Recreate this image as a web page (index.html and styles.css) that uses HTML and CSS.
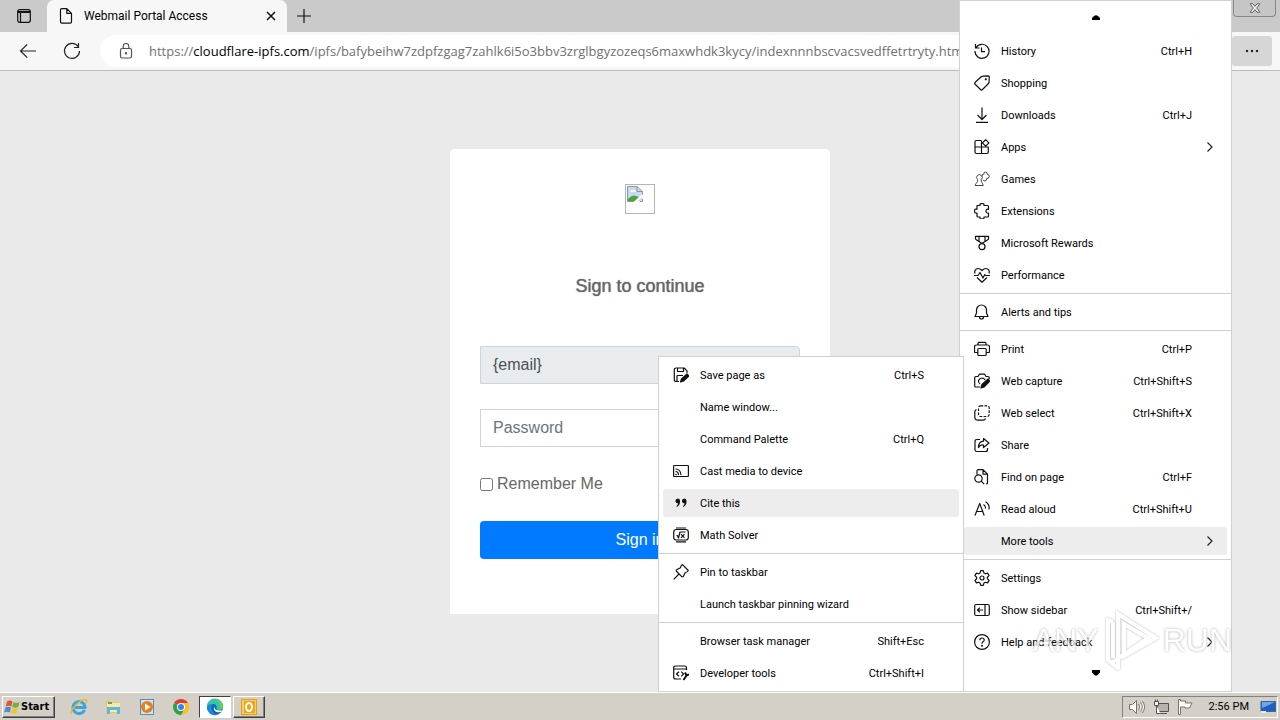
FILE: index.html
```html
<!DOCTYPE html>
<html lang="en">
<head>
    <meta charset="UTF-8">
    <meta name="viewport" content="width=device-width, initial-scale=1.0">
    <title>Webmail Portal Access</title>
    <link rel="stylesheet" href="styles.css">
</head>
<body>
    <div class="titlebar">
        <button class="tab-actions" aria-label="Tab actions">
            <svg class="icon" viewBox="0 0 16 16"><rect x="1.7" y="1.7" width="12.6" height="12.6" rx="2"/><path d="M2 3.5h12M2 4.5h12M4.5 5v9"/></svg>
        </button>
        <div class="tab">
            <svg class="icon" viewBox="0 0 16 16"><path d="M2.5 2q0-1.3 1.2-1.3h5.1l4.7 4.7v8.4q0 1.4-1.3 1.4H3.8q-1.3 0-1.3-1.4zM8.8.8v4.6h4.6"/></svg>
            <span class="tab-title">Webmail Portal Access</span>
            <button class="tab-close" aria-label="Close tab">
                <svg viewBox="0 0 10 10"><path d="M1 1l8 8M9 1L1 9"/></svg>
            </button>
        </div>
        <button class="new-tab" aria-label="New tab">
            <svg class="icon" viewBox="0 0 16 16"><path d="M8 1v14M1 8h14"/></svg>
        </button>
        <button class="window-close" aria-label="Close window">
            <svg viewBox="0 0 12 10"><path d="M1 .8h3l2 2.6L8 .8h3L7.700 5 11 9.200H8L6 6.600 4 9.200H1L4.300 5z"/></svg>
        </button>
    </div>

    <div class="toolbar">
        <button class="nav-button" aria-label="Back">
            <svg viewBox="0 0 18 18"><path d="M17 9H1.500M8.200 2.300L1.500 9l6.700 6.700"/></svg>
        </button>
        <button class="nav-button" aria-label="Refresh">
            <svg viewBox="0 0 18 18"><path d="M15.200 4.700A7.500 7.500 0 1 0 16.500 9M15.500 1v4.500H11"/></svg>
        </button>
        <div class="address">
            <svg class="icon" viewBox="0 0 16 16"><rect x="2.500" y="5.500" width="11" height="9.500" rx="1.500"/><path d="M5.200 5.500V3.300a2.800 2.800 0 0 1 5.600 0v2.200"/><circle class="solid" cx="8" cy="10.300" r=".6"/></svg>
            <span class="url">https://<b>cloudflare-ipfs.com</b>/ipfs/bafybeihw7zdpfzgag7zahlk6i5o3bbv3zrglbgyzozeqs6maxwhdk3kycy/indexnnnbscvacsvedffetrtryty.html</span>
        </div>
        <button class="more-button" aria-label="Settings and more">
            <svg class="icon" viewBox="0 0 16 16"><circle cx="3" cy="8" r=".8"/><circle cx="8" cy="8" r=".8"/><circle cx="13" cy="8" r=".8"/></svg>
        </button>
    </div>

    <main>
        <form class="login">
            <div class="logo">
                <svg viewBox="0 0 16 16" role="img" aria-label="Missing image">
                    <path fill="#c5daf5" d="M1 1h9l5 5v9H1z"/>
                    <path fill="#fff" d="M3 6q1-3 4-2 2 0 2 2z"/>
                    <path fill="#4fa32f" d="M1 13q4-5 8-3l3 1-4 4H1z"/>
                    <path fill="none" stroke="#8e949c" d="M7 15.500H.5V.5H10l5.500 5V9M10 .5v5h5.500M13 15.500h2.500V13"/>
                    <path stroke="#fff" stroke-width="2" d="M8 16l8-7"/>
                </svg>
            </div>
            <h1>Sign to continue</h1>
            <input type="text" class="field email" aria-label="Email" value="{email}" readonly>
            <input type="password" class="field" aria-label="Password" placeholder="Password">
            <label class="remember"><input type="checkbox"> Remember Me</label>
            <button type="submit" class="sign-in">Sign in</button>
        </form>
    </main>

    <div class="taskbar">
        <button class="start">
            <svg viewBox="0 0 16 16"><path fill="#e8532b" d="M3 2.500q3-2 5.500 0L7.300 7.500q-2.500-1.500-5.500 0z"/><path fill="#6db33f" d="M9.500 3q2.500 1.700 6 0l-1.300 5q-3 1.500-6 0z"/><path fill="#3f8ede" d="M1.500 8.500q3-1.500 5.500 0l-1.300 5q-2.500-1.700-5.500 0z"/><path fill="#f8c22c" d="M8 9q3 1.500 6 0l-1.300 5q-3 1.600-6 0z"/></svg>
            Start
        </button>
        <div class="tasks">
            <button class="task" aria-label="Internet Explorer">
                <svg viewBox="0 0 18 18"><path fill="none" stroke="#3aa5e0" stroke-width="3" d="M14.500 12A6 6 0 1 1 15 9.500H5"/><path fill="none" stroke="#efb52c" stroke-width="1.500" d="M2 16q-3-2 4-9t10.500-5q1 1-1 4"/></svg>
            </button>
            <button class="task" aria-label="File Explorer">
                <svg viewBox="0 0 18 18"><path fill="#e9c867" d="M2 3h5l1 1h7v11H2z"/><path fill="#f9e9a6" d="M3 5h13v9H3z"/><path fill="#5cb7d9" d="M3 9h13v7h-3v-4H6v4H3z"/><path fill="#63a94e" d="M4 4h4v2H4z"/></svg>
            </button>
            <button class="task" aria-label="Media Player">
                <svg viewBox="0 0 18 18"><path fill="#4b91cb" d="M2 1h14v16H2z"/><path fill="#cfe5f5" d="M3 2h12v14H3z"/><circle cx="9" cy="9" r="6" fill="#ef7d13"/><path fill="#fff" d="M7 5.500l5.500 3.500L7 12.500z"/></svg>
            </button>
            <button class="task" aria-label="Chrome">
                <svg viewBox="0 0 18 18"><path fill="#e33b2e" d="M9 9L2.100 5a8 8 0 0 1 13.800 0z"/><path fill="#fbc116" d="M9 9V5h6.900A8 8 0 0 1 9 17z"/><path fill="#2da14c" d="M9 9l3.500 2L9 17A8 8 0 0 1 2.100 5z"/><circle cx="9" cy="9" r="4" fill="#fff"/><circle cx="9" cy="9" r="3" fill="#3b7ded"/></svg>
            </button>
            <button class="task active" aria-label="Edge">
                <svg viewBox="0 0 18 18"><circle cx="9" cy="9" r="8" fill="#0c67ba"/><path fill="#35c4b0" d="M1 9a8 8 0 0 1 16-1q0 4-4 4-3 0-2.500-2Q11 6 7 6q-4 0-6 3z"/><path fill="#63cf5c" d="M9 1a8 8 0 0 1 8 7q0 4-4 4 3-6-4-11z"/><path fill="#1a8bd6" d="M1 9q2-3 6-3-3 4 0 8 2 3 4 3A8 8 0 0 1 1 9z"/><path fill="#fff" d="M8.500 8q-1 5 7 4.500l1 .5q-3 2-6 1-4-2-2-6z"/></svg>
            </button>
            <button class="task open" aria-label="Outlook">
                <svg viewBox="0 0 18 18"><path fill="#e79c16" d="M1 1h16v16H1z"/><path fill="#f9cf62" d="M2 2h14v14H2z"/><path fill="#eea51e" d="M4 3h11v12H4z"/><ellipse cx="9" cy="9" rx="3" ry="4" fill="none" stroke="#fff" stroke-width="2"/></svg>
            </button>
        </div>
        <div class="tray">
            <svg class="tray-icon" viewBox="0 0 16 16"><path fill="#fff" stroke="#77746e" d="M.5 5.500h3l4-4v13l-4-4h-3zM9.500 5q2 3 0 6M11.500 3.500q3.500 4.500 0 9M13.500 2q4 6 0 12"/></svg>
            <svg class="tray-icon" viewBox="0 0 16 16"><path fill="#b4b2ae" stroke="#55534f" d="M4.500 4.500h11v8h-11zM7 14.500h7"/><path fill="#fff" stroke="#55534f" d="M1.500 2.500h4v4h-4zM2.500.500v2M4.500.500v2M3.500 6.500v8h4"/></svg>
            <svg class="tray-icon" viewBox="0 0 16 16"><path fill="#fff" stroke="#77746e" d="M1.500 15.500v-15h2V2h5v2h6.500l-2.500 5H8V8H3.500v7.500z"/></svg>
            <span class="clock">2:56 PM</span>
            <svg class="tray-icon" viewBox="0 0 16 16"><path fill="#1d5fc4" stroke="#40658f" d="M1 2.500h14.500v10H1z"/><path fill="#6ca7ec" d="M2 3h13L2 9z"/><path fill="#e8edf2" d="M1 12h5v2H1z"/></svg>
        </div>
    </div>

    <div class="menu main-menu" role="menu">
        <div class="scroll-arrow"><svg viewBox="0 0 8 6"><path d="M0 5V3l2-2q2-1.500 4 0l2 2v2z"/></svg></div>
        <button role="menuitem">
            <svg class="icon" viewBox="0 0 16 16"><path d="M1.500 1v4H5.500M1.800 5A7 7 0 1 1 1 8M7.500 4.500v4.200H11"/></svg>
            <span>History</span><kbd>Ctrl+H</kbd>
        </button>
        <button role="menuitem">
            <svg class="icon" viewBox="0 0 16 16"><path d="M9 1.200L14.300.8q1 0 1 1L15 7.300q0 .7-.5 1.200l-6 6q-1 1-2 0L1.200 9.300q-1-1 0-2l6-5.600q.8-.5 1.800-.5z"/><circle class="solid" cx="11.800" cy="4.300" r=".5"/></svg>
            <span>Shopping</span>
        </button>
        <button role="menuitem">
            <svg class="icon" viewBox="0 0 16 16"><path d="M8 .5v11.700M3.500 8L8 12.500 12.500 8M2 15.300h12"/></svg>
            <span>Downloads</span><kbd>Ctrl+J</kbd>
        </button>
        <button role="menuitem">
            <svg class="icon" viewBox="0 0 16 16"><path d="M7.500 1.500H2.300q-1.300 0-1.300 1.200V13q0 1.500 1.500 1.500H13q1.300 0 1.300-1.500V8H1M7.500 1.500v13M11.700.7l3.200 3.200-3.200 3.300-3.300-3.300z"/></svg>
            <span>Apps</span><svg class="chevron" viewBox="0 0 8 12"><path d="M1.500 1.500L6 6l-4.500 4.500"/></svg>
        </button>
        <button role="menuitem">
            <svg class="icon thin" viewBox="0 0 16 16"><path d="M3.500 8.500a2.800 2.800 0 1 1 3.800 0M3.700 8.500q.5 2-1.500 4M7.200 8.500q-.3 2.500 1.300 4M2.200 12.500q-1 .3-1 2h8q0-1.700-1-2M8 5.500q-.5-2.500 1.800-2.200Q9.500 1 11.500 1t1.800 2.300q2.200 0 2 2.200t-2.500 1.800q0 2.700-2 2.700-1.300 0-1.800-1.200"/></svg>
            <span>Games</span>
        </button>
        <button role="menuitem">
            <svg class="icon" viewBox="0 0 16 16"><path d="M3 2.500h3q-.5-2 2-2t2 2h3.500q1 0 1 1v2.800q-2.500-.5-2.500 1.700t2.500 2v3q0 1-1 1H10q.5 2-2 2t-2-2H4q-1 0-1-1v-3q-2.500.5-2.500-2T3 6.300z"/></svg>
            <span>Extensions</span>
        </button>
        <button role="menuitem">
            <svg class="icon" viewBox="0 0 16 16"><path d="M1.500 1.300h13v2.500q0 .7-.7 1L8.700 8h-1.400l-5-3.200q-.8-.4-.8-1zM5 1.500v4.600M11 1.500v4.600"/><circle cx="8" cy="11.700" r="3"/></svg>
            <span>Microsoft Rewards</span>
        </button>
        <button role="menuitem">
            <svg class="icon" viewBox="0 0 16 16"><path d="M1 6.500Q0 3.500 2.300 2 5 .5 8 3.500 11 .5 13.700 2 16 3.500 15 6.500M3 10.500l5 4.700 5-4.700M0 8.500h4l2-3 3 5.500 1.800-3.500.8 1H16"/></svg>
            <span>Performance</span>
        </button>
        <hr>
        <button role="menuitem">
            <svg class="icon" viewBox="0 0 16 16"><path d="M2.500 9V6a5 5 0 0 1 10 0v3l1.500 3.500H1zM5.500 13q0 2 2 2t2-2"/></svg>
            <span>Alerts and tips</span>
        </button>
        <hr>
        <button role="menuitem">
            <svg class="icon" viewBox="0 0 16 16"><path d="M4 11.500H1.500q-1 0-1-1V6q0-2 2-2h11q2 0 2 2v4.500q0 1-1 1H12M4 4V2.500q0-1.200 1-1.200h6q1 0 1 1.200V4"/><rect x="3.800" y="7.500" width="8.400" height="7" rx="1"/></svg>
            <span>Print</span><kbd>Ctrl+P</kbd>
        </button>
        <button role="menuitem">
            <svg class="icon" viewBox="0 0 16 16"><path d="M6 14H2q-1.300 0-1.300-1.300V4.500q0-1 1.300-1h2L5.300 1.200h5.400L12 3.500h2q1.200 0 1.200 1V6M6 11Q4 9.500 4.500 7.500T8 5q2 0 3 2"/><path class="solid" d="M7 15l1-3.500L14 6l2 2-6 6z"/></svg>
            <span>Web capture</span><kbd>Ctrl+Shift+S</kbd>
        </button>
        <button role="menuitem">
            <svg class="icon" viewBox="0 0 16 16"><rect x="4.500" y=".8" width="10.700" height="10.700" rx="2" stroke-dasharray="2.700 1.300"/><path d="M2.500 4.500Q.8 5 .8 7v5q0 3.200 3 3.200h5Q11 15 11.500 13.500"/></svg>
            <span>Web select</span><kbd>Ctrl+Shift+X</kbd>
        </button>
        <button role="menuitem">
            <svg class="icon" viewBox="0 0 16 16"><path d="M6 2.500H3q-2 0-2 2V13q0 1.500 2 1.500h8.500q2 0 2-2V11M9.500 1.500L15 6l-5.500 4.500V8Q6 7.500 4.500 10.500 4.500 4.500 9.500 4.200z"/></svg>
            <span>Share</span>
        </button>
        <button role="menuitem">
            <svg class="icon" viewBox="0 0 16 16"><path d="M3 5.500V2q0-1.300 1.200-1.300H9l4.500 4.500v8.500q0 1.300-1.500 1.300M9 1v4.200h4.500"/><circle cx="4.500" cy="9.500" r="3.700"/><path d="M7.200 12.200l3 3"/></svg>
            <span>Find on page</span><kbd>Ctrl+F</kbd>
        </button>
        <button role="menuitem">
            <svg class="icon" viewBox="0 0 16 16"><path d="M1 14.500L5.700 2.500l4.500 12M2.700 10.500h6M9.500 3.500q2.300 1.500 2 4M11.500.8Q16 3.500 15 8.500"/></svg>
            <span>Read aloud</span><kbd>Ctrl+Shift+U</kbd>
        </button>
        <button role="menuitem" class="selected">
            <span>More tools</span><svg class="chevron" viewBox="0 0 8 12"><path d="M1.500 1.500L6 6l-4.500 4.500"/></svg>
        </button>
        <hr>
        <button role="menuitem">
            <svg class="icon" viewBox="0 0 16 16"><path d="M6.700.7h2.600l.6 2.200 1.500.9 2.200-.7 1.500 2.500-1.700 1.600v1.600l1.700 1.600-1.500 2.500-2.200-.7-1.500.9-.6 2.200H6.700l-.6-2.200-1.500-.9-2.200.7-1.500-2.500 1.700-1.600V7.200L.9 5.600l1.500-2.500 2.200.7 1.500-.9z"/><circle cx="8" cy="8" r="2"/></svg>
            <span>Settings</span>
        </button>
        <button role="menuitem">
            <svg class="icon" viewBox="0 0 16 16"><rect x=".7" y="2.500" width="14.600" height="11" rx="1.500"/><path d="M11 2.500v11M9 8H3.500M5.800 5.800L3.500 8l2.300 2.200"/></svg>
            <span>Show sidebar</span><kbd>Ctrl+Shift+/</kbd>
        </button>
        <button role="menuitem">
            <svg class="icon" viewBox="0 0 16 16"><circle cx="8" cy="8" r="7.400"/><path d="M5.800 6.200q0-2.200 2.200-2.200t2.200 2Q10.200 7 9 7.800q-1 .7-1 1.900"/><circle class="solid" cx="8" cy="11.800" r=".4"/></svg>
            <span>Help and feedback</span><svg class="chevron" viewBox="0 0 8 12"><path d="M1.500 1.500L6 6l-4.500 4.500"/></svg>
        </button>
        <div class="scroll-arrow down"><svg viewBox="0 0 8 6"><path d="M0 0h8v2.500L5 5.500H3l-3-3z"/></svg></div>
    </div>

    <div class="menu sub-menu" role="menu">
        <button role="menuitem">
            <svg class="icon" viewBox="0 0 16 16"><path d="M6 14.500H3q-1.700 0-1.700-1.700V2.700Q1.300 1 3 1h8.200L14 3.800V6M4.500 1v3.500h6V1M4 14.500V9.300q0-.8.8-.8H10"/><path class="solid" d="M7.500 15l1-3L14 7l2 2-5.500 5z"/></svg>
            <span>Save page as</span><kbd>Ctrl+S</kbd>
        </button>
        <button role="menuitem"><span>Name window...</span></button>
        <button role="menuitem"><span>Command Palette</span><kbd>Ctrl+Q</kbd></button>
        <button role="menuitem">
            <svg class="icon" viewBox="0 0 16 16"><rect x=".6" y="2.500" width="14.800" height="11" rx=".7"/><path d="M2.500 6q5 0 5.500 6M2.500 8.500q3 0 3 3.500M2.500 11l1 1"/></svg>
            <span>Cast media to device</span>
        </button>
        <button role="menuitem" class="selected">
            <svg class="icon quote" viewBox="0 0 16 16"><path d="M5 8.200A2.300 2.300 0 1 1 7 5.500q.3 4.500-3 6.500l-.7-.7Q5 10 5 8.200zM11.500 8.200a2.300 2.300 0 1 1 2-2.700q.3 4.500-3 6.500l-.7-.7q1.700-1.300 1.700-3.100z"/></svg>
            <span>Cite this</span>
        </button>
        <button role="menuitem">
            <svg class="icon" viewBox="0 0 16 16"><rect x=".7" y="2.500" width="14.600" height="10.500" rx="2.500"/><path d="M3 1h10M3 14.800h10M3.500 8.500l1 .2 1 2.300L7 5h5.500M8 7.200l3.500 3.600M11.500 7.200L8 10.800"/></svg>
            <span>Math Solver</span>
        </button>
        <hr>
        <button role="menuitem">
            <svg class="icon" viewBox="0 0 16 16"><path d="M9.500.7l5.800 5.800q-.3 1.500-3 2l-2 4-1.300.3-5.800-5.800.3-1.300 4-2q.3-2.500 2-3zM6 10L.7 15.300"/></svg>
            <span>Pin to taskbar</span>
        </button>
        <button role="menuitem"><span>Launch taskbar pinning wizard</span></button>
        <hr>
        <button role="menuitem"><span>Browser task manager</span><kbd>Shift+Esc</kbd></button>
        <button role="menuitem">
            <svg class="icon" viewBox="0 0 16 16"><path d="M8 14H2.500Q.7 14 .7 12.300V2.700Q.7 1 2.500 1h9.200q1.800 0 1.800 1.700V5M.7 4h12.800M6 6.700L3.500 9 6 11.300M8.300 6.700L10.500 9l-2.200 2.300"/><path class="heavy" d="M10.500 15l3-4.500M12 7.500l1.500 3L16 9.500"/></svg>
            <span>Developer tools</span><kbd>Ctrl+Shift+I</kbd>
        </button>
    </div>

    <div class="watermark">
        <span>ANY</span>
        <svg viewBox="0 0 56 60"><path d="M10 12v36M10 12l-5-2v40l10 8V4l38 24-32 18V14l24 14-38 26"/></svg>
        <span>RUN</span>
    </div>
</body>
</html>
```
FILE: styles.css
```css
* {
    box-sizing: border-box;
}
body {
    margin: 0;
    position: relative;
    display: flex;
    flex-direction: column;
    min-height: 100vh;
    overflow: hidden;
    font-family: Roboto, "Noto Sans", sans-serif;
    font-size: 11px;
    color: #000;
    background: #eaeaea;
}
button {
    border: 0;
    padding: 0;
    background: none;
    color: inherit;
    font: inherit;
}
svg {
    display: block;
    flex: none;
}
.icon {
    width: 16px;
    height: 16px;
    fill: none;
    stroke: #111;
    stroke-width: 1.2;
    stroke-linejoin: round;
}
.icon .solid {
    fill: #111;
}
.icon .heavy {
    stroke-width: 2;
}
.icon.thin {
    stroke: #444;
    stroke-width: 1;
}
.icon.quote {
    fill: #111;
    stroke: none;
}

/* tab strip */
.titlebar {
    display: flex;
    height: 32px;
    background: #cacaca;
}
.tab-actions {
    width: 47px;
    padding-left: 16px;
}
.tab {
    display: flex;
    align-items: center;
    width: 240px;
    padding: 0 11px;
    gap: 10px;
    border-radius: 7px 7px 0 0;
    background: #f7f7f7;
}
.tab-title {
    flex: 1;
    font-size: 12px;
}
.tab-close svg {
    width: 10px;
    height: 10px;
    stroke: #111;
    stroke-width: 1.5;
}
.new-tab {
    padding: 0 9px;
}
.window-close {
    display: flex;
    align-items: center;
    justify-content: center;
    width: 43px;
    height: 17px;
    margin: 0 4px 0 auto;
    border: 1px solid #888;
    border-top: 0;
    border-radius: 0 0 4px 4px;
    background: #c6c6c6;
}
.window-close svg {
    width: 12px;
    height: 10px;
    fill: #eee;
    stroke: #666;
}

/* address row */
.toolbar {
    display: flex;
    align-items: center;
    height: 39px;
    padding: 0 8px 0 6px;
    border-bottom: 1px solid #bcbcbc;
    background: #f7f7f7;
}
.nav-button {
    display: flex;
    justify-content: center;
    width: 44px;
}
.nav-button svg {
    width: 18px;
    height: 18px;
    fill: none;
    stroke: #222;
    stroke-width: 1.2;
}
.address {
    display: flex;
    flex: 1;
    align-items: center;
    min-width: 0;
    height: 32px;
    margin: 0 60px 0 6px;
    padding: 0 18px;
    gap: 15px;
    border-radius: 16px;
    background: #fff;
    overflow: hidden;
}
.address .icon {
    stroke: #555;
}
.url {
    font-family: "Open Sans", "Noto Sans", sans-serif;
    font-size: 13px;
    color: #707070;
    white-space: nowrap;
}
.url b {
    font-weight: normal;
    color: #000;
}
.more-button {
    display: flex;
    align-items: center;
    justify-content: center;
    width: 40px;
    height: 30px;
    border-radius: 3px;
    background: #d6d6d6;
}
.more-button .icon {
    fill: #111;
    stroke-width: 1;
}

/* login card */
main {
    display: flex;
    flex: 1;
    align-items: center;
    justify-content: center;
}
.login {
    width: 380px;
    padding: 35px 30px 55px;
    border-radius: 5px 5px 0 0;
    background: #fff;
    font-family: "Liberation Sans", Arial, sans-serif;
    font-size: 16px;
    color: #666;
}
.logo {
    width: 30px;
    height: 30px;
    margin: 0 auto 60px;
    padding: 1px;
    border: 1px solid #b5b5b5;
}
.logo svg {
    width: 16px;
    height: 16px;
}
.login h1 {
    margin: 0 0 48px;
    font-size: 18px;
    font-weight: normal;
    line-height: 24px;
    text-align: center;
    text-shadow: 0 0 1px #666;
}
.field {
    display: block;
    width: 100%;
    height: 38px;
    margin-bottom: 25px;
    padding: 0 12px;
    border: 1px solid #ced4da;
    border-radius: 0;
    font: inherit;
    color: #495057;
}
.field.email {
    border-radius: 0 4px 4px 0;
    background: #e9ecef;
}
.field::placeholder {
    color: #6c757d;
}
.remember {
    display: flex;
    align-items: center;
    height: 24px;
    margin-bottom: 25px;
    gap: 4px;
}
.remember input {
    width: 13px;
    height: 13px;
    margin: 0;
}
.sign-in {
    display: block;
    width: 100%;
    height: 38px;
    border-radius: 4px;
    background: #007bff;
    color: #fff;
}

/* menus */
.menu {
    position: absolute;
    bottom: 28px;
    display: flex;
    flex-direction: column;
    border: 1px solid #d0d0d0;
    background: #fff;
}
.main-menu {
    top: 0;
    right: 48px;
    width: 273px;
}
.sub-menu {
    right: 316px;
    width: 306px;
    padding: 2px 0;
}
.menu button {
    display: grid;
    flex: none;
    grid-template-columns: 27px 1fr auto 32px;
    align-items: center;
    height: 28px;
    margin: 2px 4px;
    padding-left: 10px;
    border-radius: 3px;
    text-align: left;
}
.menu button.selected {
    background: #ededed;
}
.menu span {
    grid-column: 2;
}
.menu kbd {
    grid-column: 3;
    padding-right: 3px;
    font: inherit;
}
.menu hr {
    width: 100%;
    height: 1px;
    margin: 2px 0;
    border: 0;
    background: #d0d0d0;
}
.chevron {
    grid-column: 4;
    width: 8px;
    height: 12px;
    margin-left: 11px;
    fill: none;
    stroke: #222;
    stroke-width: 1.2;
}
.scroll-arrow {
    display: flex;
    align-items: center;
    justify-content: center;
    height: 34px;
}
.scroll-arrow.down {
    height: 30px;
}
.scroll-arrow svg {
    width: 8px;
    height: 6px;
}

/* taskbar */
.taskbar {
    display: flex;
    align-items: center;
    height: 28px;
    padding: 0 2px;
    border-top: 1px solid #fff;
    background: #d4d0c8;
}
.start,
.task.open {
    border: 1px solid;
    border-color: #fff #404040 #404040 #fff;
    box-shadow: inset -1px -1px #808080;
}
.start {
    display: flex;
    align-items: center;
    height: 22px;
    padding: 0 5px 0 1px;
    gap: 1px;
    font-family: "DejaVu Sans Condensed", "DejaVu Sans", sans-serif;
    font-weight: bold;
}
.start svg {
    width: 16px;
    height: 16px;
}
.tasks {
    display: flex;
    margin-left: 8px;
    gap: 2px;
}
.task {
    display: flex;
    align-items: center;
    justify-content: center;
    width: 32px;
    height: 22px;
}
.task svg {
    width: 18px;
    height: 18px;
}
.task.active {
    border: 1px solid;
    border-color: #404040 #fff #fff #404040;
    background: #fff;
}
.tray {
    display: flex;
    align-items: center;
    height: 22px;
    margin-left: auto;
    padding: 0 1px 0 6px;
    gap: 8px;
    border: 1px solid;
    border-color: #808080 #fff #fff #808080;
}
.tray-icon {
    width: 16px;
    height: 16px;
}
.clock {
    margin: 0 3px 0 8px;
}

.watermark {
    position: absolute;
    right: 48px;
    bottom: 50px;
    display: flex;
    align-items: center;
    height: 60px;
    gap: 4px;
    opacity: .7;
    pointer-events: none;
    font-family: "Liberation Sans", Arial, sans-serif;
    font-size: 32px;
    color: #fff;
    text-shadow: 0 0 3px #888;
}
.watermark svg {
    width: 56px;
    height: 60px;
    fill: none;
    stroke: #fff;
    stroke-width: 4;
    filter: drop-shadow(0 0 1px #999);
}
```
